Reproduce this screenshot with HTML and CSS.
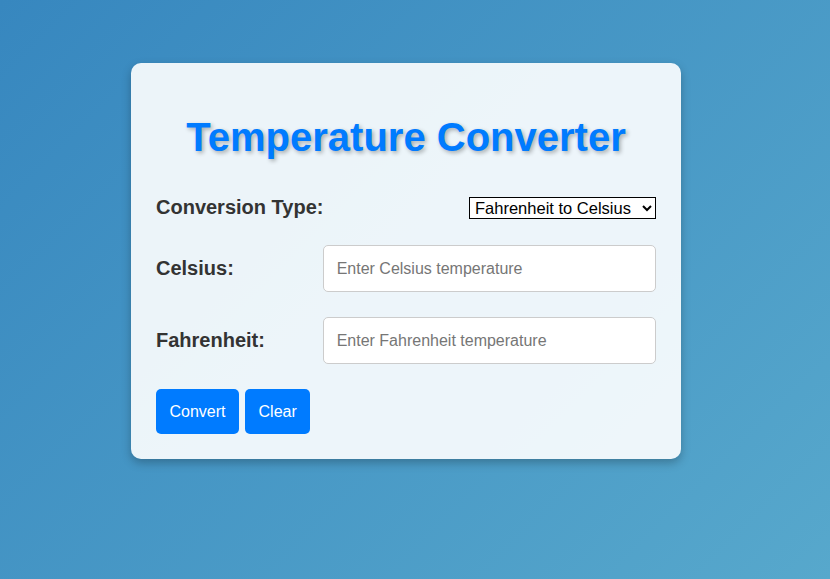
FILE: index.html
```html
<!DOCTYPE html>
<html lang="en">
<head>
<meta charset="utf-8">
<title>Temperature Converter</title>
<link rel="stylesheet" href="styles.css">
</head>
<body>
<div class="page">
  <div class="card">
    <h1 class="title">Temperature Converter</h1>
    <div class="row row-select">
      <label class="label" for="type">Conversion Type:</label>
      <select id="type" class="select">
        <option>Fahrenheit to Celsius</option>
        <option>Celsius to Fahrenheit</option>
      </select>
    </div>
    <div class="row">
      <label class="label" for="c">Celsius:</label>
      <input id="c" class="input" type="text" placeholder="Enter Celsius temperature">
    </div>
    <div class="row">
      <label class="label" for="f">Fahrenheit:</label>
      <input id="f" class="input" type="text" placeholder="Enter Fahrenheit temperature">
    </div>
    <div class="buttons">
      <button class="btn">Convert</button>
      <button class="btn">Clear</button>
    </div>
  </div>
</div>
</body>
</html>
```
FILE: styles.css
```css
html, body {
  margin: 0;
  padding: 0;
  height: 100%;
}
body {
  font-family: Arial, "Liberation Sans", sans-serif;
  background: linear-gradient(135deg, #3787bf 0%, #57a8cc 100%);
}
.page {
  padding-top: 63px;
  padding-left: 131px;
}
.card {
  box-sizing: border-box;
  width: 550px;
  padding: 25px;
  border-radius: 10px;
  background: rgba(255, 255, 255, 0.9);
  box-shadow: 0 4px 10px rgba(0, 0, 0, 0.25);
}
.title {
  margin: 26px 0 36px;
  font-size: 40px;
  font-weight: bold;
  text-align: center;
  color: #007bff;
  line-height: 46px;
  text-shadow: 2px 2px 4px rgba(0, 0, 0, 0.3);
}
.row {
  display: flex;
  align-items: center;
  margin-bottom: 25px;
}
.row-select {
  justify-content: space-between;
  margin-bottom: 26px;
}
.label {
  flex: 0 0 33.3333%;
  font-size: 20px;
  font-weight: bold;
  color: #333;
}
.row-select .label {
  flex: none;
}
.select {
  box-sizing: border-box;
  width: 187px;
  font-family: Arial, "Liberation Sans", sans-serif;
  font-size: 16.5px;
  height: 22px;
  padding: 0 0 0 1px;
  border: 1px solid #000;
  border-radius: 0;
  background: #fff;
  color: #000;
}
.input {
  flex: 1 1 auto;
  width: 0;
  min-width: 0;
  box-sizing: border-box;
  height: 47px;
  padding: 0 13px;
  font-family: Arial, "Liberation Sans", sans-serif;
  font-size: 16px;
  border: 1px solid #ccc;
  border-radius: 5px;
  background: #fff;
}
.input::placeholder {
  color: #767676;
}
.buttons {
  display: flex;
  gap: 6px;
}
.btn {
  height: 45px;
  padding: 0 13.5px;
  font-family: Arial, "Liberation Sans", sans-serif;
  font-size: 16px;
  color: #fff;
  background: #007bff;
  border: none;
  border-radius: 5px;
}
```
